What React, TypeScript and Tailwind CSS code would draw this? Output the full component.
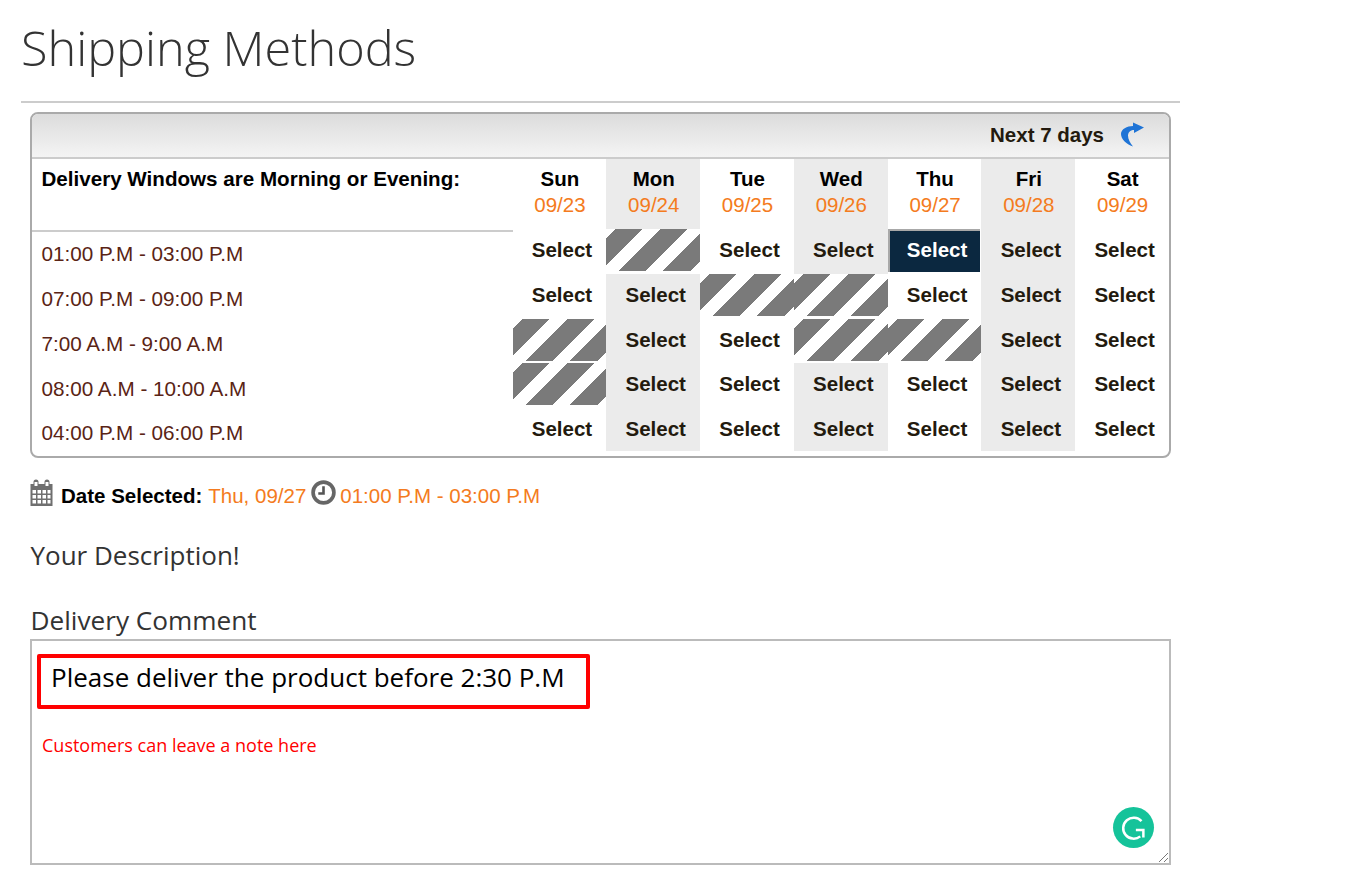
const sans = "font-['Liberation_Sans',Arial,sans-serif]";
const open = "font-['Open_Sans',sans-serif]";

const days = [
  ['Sun', '09/23'],
  ['Mon', '09/24'],
  ['Tue', '09/25'],
  ['Wed', '09/26'],
  ['Thu', '09/27'],
  ['Fri', '09/28'],
  ['Sat', '09/29'],
];

// x = not available, s = selected, o = open
const rows = [
  { label: '01:00 P.M - 03:00 P.M', cells: 'oxoosoo', h: 'h-[44.75px]' },
  { label: '07:00 P.M - 09:00 P.M', cells: 'ooxxooo', h: 'h-[44.75px]' },
  { label: '7:00 A.M - 9:00 A.M', cells: 'xooxxoo', h: 'h-[44.75px]' },
  { label: '08:00 A.M - 10:00 A.M', cells: 'xoooooo', h: 'h-[44.75px]' },
  { label: '04:00 P.M - 06:00 P.M', cells: 'ooooooo', h: 'h-[43px]' },
];

function Slot({ kind, col }: { kind: string; col: number }) {
  const shaded = col % 2 === 1 ? 'bg-[#ebebeb]' : 'bg-white';
  if (kind === 'x') {
    return (
      <div className="bg-white">
        <div className="h-[42px] bg-[repeating-linear-gradient(135deg,#fff_0,#fff_6.4px,#7a7a7a_6.4px,#7a7a7a_25.5px,#fff_25.5px,#fff_31.8px)]" />
      </div>
    );
  }
  if (kind === 's') {
    return (
      <div className="bg-white">
        <div className="h-[43px] flex items-center justify-center pl-1 pb-[2px] bg-[#0b2840] border-t-2 border-l-2 border-[#a8a8a8] mr-px text-white text-[20.5px] font-bold">
          Select
        </div>
      </div>
    );
  }
  return (
    <div className={`${shaded} flex justify-center pl-[5px] pt-[8px] text-[20.5px] leading-[26px] font-bold text-[#231a0e]`}>
      Select
    </div>
  );
}

function ScheduleTable() {
  return (
    <div className={`${sans} w-[1141px] border-2 border-[#aaaaaa] rounded-lg overflow-hidden`}>
      <div className="h-[45px] border-b-2 border-[#cccccc] bg-gradient-to-b from-[#dcdcdc] to-[#f4f4f4] flex items-center justify-end pr-[25px]">
        <span className="text-[20.5px] font-bold text-[#231a0e]">Next 7 days</span>
        <svg viewBox="0 0 24 24" className="w-[24px] h-[25px] ml-[16px] mb-[2px]">
          <path d="M13 0L24 5L14 10.500V7.500C10 7.500 8 10 8 13C8 17 10 20 13 24C6 21.500 1 16.500 1 11.500C1 6.500 7 3.500 13 3.500Z" fill="#1f74d6" />
        </svg>
      </div>
      <div className="grid grid-cols-[480.6px_repeat(7,1fr)]">
        <div className="h-[70px] text-[20.6px] leading-[26px] font-bold text-black">
          <div className="h-[73px] pt-[7px] pl-[9.5px] border-b-2 border-[#cccccc]">
            Delivery Windows are Morning or Evening:
          </div>
        </div>
        {days.map(([name, date], i) => (
          <div
            key={name}
            className={`${i % 2 === 1 ? 'bg-[#ebebeb]' : 'bg-white'} h-[70px] pt-[7px] pl-px text-center text-[20.5px] leading-[26px]`}
          >
            <div className="font-bold text-black">{name}</div>
            <div className="text-[#f47b20]">{date}</div>
          </div>
        ))}
        {rows.map((row) => (
          <div key={row.label} className="contents">
            <div className={`${row.h} pl-[9.5px] pt-[12.4px] text-[20.7px] leading-[26px] text-[#5a2415]`}>{row.label}</div>
            {row.cells.split('').map((kind, col) => (
              <Slot key={col} kind={kind} col={col} />
            ))}
          </div>
        ))}
      </div>
      <div className="h-[5px]" />
    </div>
  );
}

function CommentBox() {
  return (
    <div className="relative w-[1141px] h-[226px] border-2 border-[#bbbbbb] pt-[13px] pl-[5px] bg-white">
      <div className="w-[553px] h-[55px] border-[4px] border-[#ff0000] rounded-[2px] pl-[10px] pt-[1px] text-[26px] leading-[36px] text-black">
        Please deliver the product before 2:30 P.M
      </div>
      <div className="mt-[24px] ml-[5px] text-[18px] leading-[24px] text-[#ff0000]">Customers can leave a note here</div>
      <div className="absolute right-[15px] bottom-[15px] w-[41px] h-[41px] rounded-full bg-[#15c39a] flex items-center justify-center">
        <svg viewBox="0 0 24 24" className="w-[30px] h-[30px]" fill="none" stroke="#fff" strokeWidth="2">
          <path d="M18 6.500A8.400 8.400 0 1 0 17 18.700" />
          <path d="M13.500 13.500H19.500V19.500" />
        </svg>
      </div>
      <svg viewBox="0 0 12 12" className="absolute right-0 bottom-0 w-[12px] h-[12px]" stroke="#777" strokeWidth="1">
        <path d="M11 2L2 11M11 7l-4 4" />
      </svg>
    </div>
  );
}

export default function App() {
  return (
    <div className="min-h-[878px] bg-white pl-[21px] overflow-hidden">
      <div className="w-[1159px]">
        <h1 className={`${open} h-[103px] pt-[14px] border-b-2 border-[#cccccc] text-[48.6px] leading-[66px] font-light text-[#333333]`}>
          Shipping Methods
        </h1>
        <div className="pl-[9px] pt-[9px]">
          <ScheduleTable />
          <div className={`${sans} mt-[22px] h-[32px] flex items-center text-[20.5px] text-[#f47b20]`}>
            <svg viewBox="1 0 22 27" className="w-[23px] h-[27px] mb-[8px]" fill="#6f6f6f">
              <path d="M1 5h3V3a2.500 2.500 0 0 1 5 0v2h6V3a2.500 2.500 0 0 1 5 0v2h3v22H1V5zm4-2v4h3V3H5zm11 0v4h3V3h-3zM3 11v3.500h3.500V11H3zm5 0v3.500h3.500V11H8zm5 0v3.500h3.500V11H13zm5 0v3.500h3V11h-3zM3 16v3.500h3.500V16H3zm5 0v3.500h3.500V16H8zm5 0v3.500h3.500V16H13zm5 0v3.500h3V16h-3zM3 21v3.500h3.500V21H3zm5 0v3.500h3.500V21H8zm5 0v3.500h3.500V21H13zm5 0v3.500h3V21h-3z" fillRule="evenodd" />
            </svg>
            <span className="ml-[8px] font-bold text-black">Date Selected:</span>
            <span className="ml-[6px]">Thu, 09/27</span>
            <svg viewBox="0 0 24 24" className="w-[25px] h-[25px] ml-[5px] mb-[7px]" fill="none">
              <circle cx="12" cy="12" r="10" stroke="#666" strokeWidth="3.5" />
              <path d="M12 6v7H7" stroke="#555" strokeWidth="2.500" />
            </svg>
            <span className="ml-[4px]">01:00 P.M - 03:00 P.M</span>
          </div>
          <div className={open}>
            <p className="mt-[27px] pl-[0.5px] text-[26px] leading-[32px] text-[#333333]">Your Description!</p>
            <p className="mt-[33px] pl-[0.5px] text-[26.2px] leading-[32px] text-[#333333]">Delivery Comment</p>
            <div className="mt-[3px]">
              <CommentBox />
            </div>
          </div>
        </div>
      </div>
    </div>
  );
}
